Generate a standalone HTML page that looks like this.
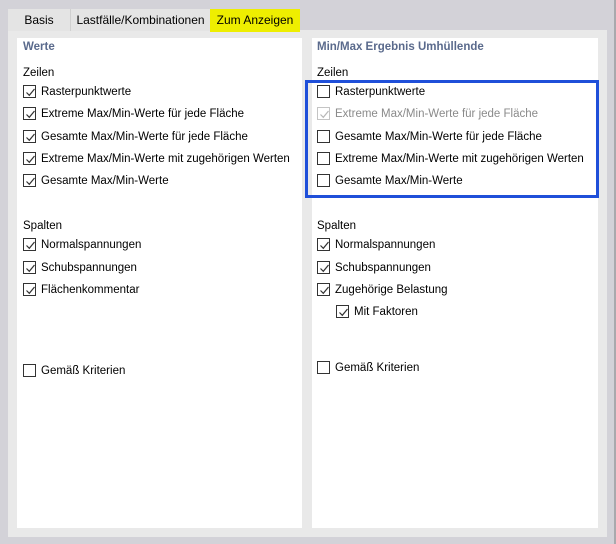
<!DOCTYPE html>
<html><head><meta charset="utf-8"><style>
*{margin:0;padding:0;box-sizing:border-box}
body{width:616px;height:544px;background:#d3d2d8;position:relative;overflow:hidden;font-family:"Liberation Sans",sans-serif;font-size:11.5px;color:#000}
.a{position:absolute;white-space:nowrap}
.tab{position:absolute;top:9px;height:22px;line-height:22px;text-align:center;background:#e4e4e4;font-size:12px}
.cb{position:absolute;width:13px;height:13px;border:1px solid #333;background:#fff}
.cb svg{position:absolute;left:1px;top:1px}
.t{position:absolute;white-space:nowrap;line-height:14px}
.h{color:#5a6a8c;font-weight:bold;font-size:11.5px}
</style></head><body>
<div class="a" style="left:8px;top:30px;width:599px;height:507px;background:#e9e9e9"></div>
<div class="a" style="left:614px;top:0;width:2px;height:544px;background:#a9a9ad"></div>
<div class="tab" style="left:8px;width:62px">Basis</div>
<div class="tab" style="left:70px;width:140px;border-left:1px solid #d0d0d0">Lastfälle/Kombinationen</div>
<div class="tab" style="left:210px;width:90px;background:#eeee00;height:23px">Zum Anzeigen</div>
<div class="a" style="left:17px;top:38px;width:285px;height:490px;background:#fff"></div>
<div class="a" style="left:312px;top:38px;width:286px;height:490px;background:#fff"></div>
<div class="a" style="left:305px;top:80px;width:294px;height:118px;border:3px solid #1f4fd9"></div>

<div id="c"></div>
<script>
const ck='<svg width="11" height="11"><path d="M1.5 5.5 L4.3 8.3 L9.5 2" stroke="COL" stroke-width="1.2" fill="none"/></svg>';
const items=[
[23,47,null,'Werte','h'],[23,73,null,'Zeilen'],
[23,92,1,'Rasterpunktwerte'],[23,114,1,'Extreme Max/Min-Werte für jede Fläche'],[23,137,1,'Gesamte Max/Min-Werte für jede Fläche'],[23,159,1,'Extreme Max/Min-Werte mit zugehörigen Werten'],[23,181,1,'Gesamte Max/Min-Werte'],
[23,226,null,'Spalten'],[23,245,1,'Normalspannungen'],[23,268,1,'Schubspannungen'],[23,290,1,'Flächenkommentar'],[23,371,0,'Gemäß Kriterien'],
[317,47,null,'Min/Max Ergebnis Umhüllende','h'],[317,73,null,'Zeilen'],
[317,92,0,'Rasterpunktwerte'],[317,114,2,'Extreme Max/Min-Werte für jede Fläche'],[317,137,0,'Gesamte Max/Min-Werte für jede Fläche'],[317,159,0,'Extreme Max/Min-Werte mit zugehörigen Werten'],[317,181,0,'Gesamte Max/Min-Werte'],
[317,226,null,'Spalten'],[317,245,1,'Normalspannungen'],[317,268,1,'Schubspannungen'],[317,290,1,'Zugehörige Belastung'],[336,312,1,'Mit Faktoren'],[317,368,0,'Gemäß Kriterien']];
let h='';
for(const [x,y,c,txt,cls] of items){
 if(c===null){h+=`<div class="t ${cls||''}" style="left:${x}px;top:${y-7}px">${txt}</div>`;continue;}
 const dis=c===2;
 h+=`<div class="cb" style="left:${x}px;top:${y-7}px;${dis?'border-color:#c4c4c4':''}">${c?ck.replace('COL',dis?'#b8b8b8':'#333'):''}</div>`;
 h+=`<div class="t" style="left:${x+18}px;top:${y-7}px;${dis?'color:#8a8a8a':''}">${txt}</div>`;
}
document.getElementById('c').innerHTML=h;
</script>
</body></html>
